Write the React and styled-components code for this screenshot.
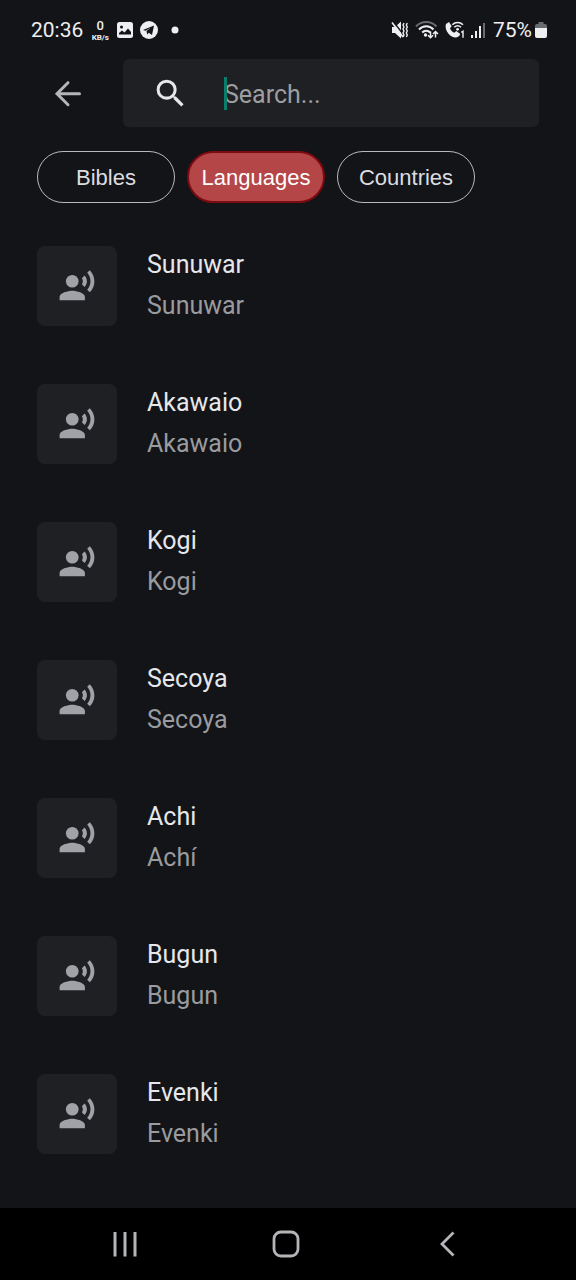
import React, { useState } from 'react';
import styled, { createGlobalStyle } from 'styled-components';
import { MdRecordVoiceOver, MdSearch } from 'react-icons/md';

const GlobalStyle = createGlobalStyle`
* {
    box-sizing: border-box;
}
body {
    margin: 0;
    background: #121418;
    font-family: Roboto, "Noto Sans", sans-serif;
}
`;
const Screen = styled.div`
display: flex;
flex-direction: column;
min-height: 100vh;
background: #121418;
color: #e6e7ea;
`;
const StatusBar = styled.div`
display: flex;
align-items: center;
justify-content: space-between;
height: 59px;
padding: 0 29px 0 31px;
font-size: 21px;
line-height: 24px;
color: #eeeff1;
`;
const StatusGroup = styled.div`
display: flex;
align-items: center;
gap: ${props => props.$gap}px;
svg {
    display: block;
}
`;
const Speed = styled.div`
display: flex;
flex-direction: column;
align-items: center;
width: 20px;
font-size: 13px;
font-weight: 500;
line-height: 15px;
`;
const SpeedUnit = styled.span`
font-size: 8px;
font-weight: 700;
line-height: 9px;
`;
const Header = styled.header`
display: flex;
align-items: center;
gap: 24px;
padding: 0 37px;
`;
const IconButton = styled.button`
display: flex;
align-items: center;
justify-content: center;
width: ${props => props.$width || '100%'};
height: 68px;
padding: 0;
border: 0;
background: none;
color: #b4b5b9;
`;
const SearchBox = styled.label`
display: flex;
align-items: center;
flex: 1;
gap: 35px;
height: 68px;
padding: 0 29px;
border-radius: 6px;
background: #1e2023;
color: #e6e7ea;
`;
const Field = styled.div`
position: relative;
flex: 1;
min-width: 0;
`;
const Caret = styled.span`
position: absolute;
left: 0;
top: 0;
width: 3px;
height: 33px;
background: #0a7d6c;
`;
const SearchInput = styled.input`
display: block;
width: 100%;
height: 33px;
padding: 2px 0 0;
border: 0;
outline: 0;
background: none;
font-family: inherit;
font-size: 25px;
color: #e6e7ea;
&::placeholder {
    color: #9d9ea1;
    opacity: 1;
}
`;
const Filters = styled.div`
display: flex;
gap: 12px;
padding: 24px 37px 14px;
`;
const Pill = styled.button`
width: 138px;
height: 52px;
padding: 2px 0 0;
border-style: solid;
border-color: ${props => (props.$active ? '#7d0a10' : '#b8b9bd')};
border-width: ${props => (props.$active ? 2 : 1)}px;
border-radius: 26px;
background: ${props => (props.$active ? '#b54648' : 'transparent')};
font-family: "Liberation Sans", Arial, sans-serif;
font-size: 22px;
color: ${props => (props.$active ? '#ffffff' : '#dcdde0')};
`;
const List = styled.ul`
flex: 1;
margin: 0;
padding: 0 37px;
list-style: none;
`;
const Row = styled.li`
display: flex;
align-items: center;
gap: 30px;
height: 138px;
`;
const Thumbnail = styled.div`
display: flex;
align-items: center;
justify-content: center;
width: 80px;
height: 80px;
border-radius: 8px;
background: #1e2023;
color: #a1a2a7;
`;
const Names = styled.div`
padding-bottom: 2px;
font-size: 25px;
line-height: 41px;
`;
const Name = styled.div`
color: #e6e7ea;
`;
const NativeName = styled.div`
color: #9a9b9f;
`;
const NavBar = styled.nav`
display: grid;
grid-template-columns: repeat(3, 1fr);
align-items: center;
height: 72px;
padding: 0 48px 0 44px;
background: #000000;
`;

const MuteIcon = () => (
    <svg width="18" height="20" viewBox="0 0 18 20" fill="none" stroke="currentColor">
        <path d="M1 7h3l6-5.500v17L4 13H1z" fill="currentColor" stroke="none" />
        <path d="M2.300 1.500l10 13" stroke="#121418" strokeWidth="1.400" />
        <path d="M1 2.500l11 14.500" strokeWidth="1.600" />
        <path d="M13 3l-1 2 1 2-1 2 1 2-1 2 1 2-1 2M16.300 3l-1 2 1 2-1 2 1 2-1 2 1 2-1 2" strokeWidth="1.400" />
    </svg>
);
const WifiIcon = () => (
    <svg width="24" height="20" viewBox="0 0 24 20" fill="none" stroke="currentColor">
        <path d="M1 6.500c5.500-6 15-6 20.500 0" strokeWidth="2" opacity="0.4" />
        <path d="M4 9.500c4-4.300 10.500-4.300 14.500 0M7.200 12.500c2.300-2.500 5.800-2.500 8 0" strokeWidth="2" />
        <circle cx="10.500" cy="15" r="1.700" fill="currentColor" stroke="none" />
        <path d="M15.500 11.500v6M13 15.200l2.500 2.500 2.500-2.500M20.500 17.500v-6M18 14l2.500-2.500L23 14" strokeWidth="1.500" />
    </svg>
);
const CallIcon = () => (
    <svg width="20" height="20" viewBox="0 0 20 20" fill="none" stroke="currentColor">
        <path d="M1 4l3-2 2.700 4.300-1.700 2c.8 2 2.200 3.600 4.300 4.500l2-1.700 4 2.900c-.8 2.300-2.500 3.500-4.800 3.500C5 17.300-1 10 1 4z" fill="currentColor" stroke="none" />
        <path d="M7.300 4.800c3-3 7.700-3 10.700 0M9.300 7.200c2-2 4.700-2 6.700 0" strokeWidth="1.600" />
        <circle cx="12.600" cy="9.300" r="1.400" fill="currentColor" stroke="none" />
        <path d="M16.300 12.300l1.700-1v6.500" strokeWidth="1.400" />
    </svg>
);
const SignalIcon = () => (
    <svg width="16" height="18" viewBox="0 0 16 18" fill="currentColor">
        <rect x="0" y="14" width="2" height="3" />
        <rect x="4" y="10" width="2" height="7" />
        <rect x="8" y="5" width="2" height="12" />
        <rect x="12" y="2" width="2" height="15" opacity="0.4" />
    </svg>
);
const BatteryIcon = () => (
    <svg width="12" height="18" viewBox="0 0 12 18" fill="currentColor">
        <path d="M3.500 1h5v2H10a2 2 0 0 1 2 2v2H0V5a2 2 0 0 1 2-2h1.500z" opacity="0.4" />
        <path d="M0 7h12v8a2 2 0 0 1-2 2H2a2 2 0 0 1-2-2z" />
    </svg>
);
const PictureIcon = () => (
    <svg width="16" height="16" viewBox="0 0 16 16">
        <rect width="16" height="16" rx="2.500" fill="currentColor" />
        <circle cx="4.500" cy="5" r="1.500" fill="#121418" />
        <path d="M2 12.500V11l3-2.500 2.500 2L11 6.500l3 3.500v2.500z" fill="#121418" />
    </svg>
);
const TelegramIcon = () => (
    <svg width="18" height="18" viewBox="0 0 18 18">
        <circle cx="9" cy="9" r="9" fill="currentColor" />
        <path d="M3 8.900l11-4.400-2 9.500-3.200-2.300-1.600 1.700-.7-3.300 4.500-3.600-5.500 3.300z" fill="#121418" />
    </svg>
);
const DotIcon = () => (
    <svg width="20" height="8" viewBox="0 0 20 8">
        <circle cx="10" cy="4" r="3.500" fill="currentColor" />
    </svg>
);
const ArrowIcon = () => (
    <svg width="28" height="28" viewBox="0 0 28 28" fill="none" stroke="currentColor" strokeWidth="3" strokeLinecap="round">
        <path d="M25.500 14.700H3M14 3.700l-11 11 11 11" />
    </svg>
);
const RecentsIcon = () => (
    <svg width="26" height="28" viewBox="0 0 26 28" fill="none" stroke="currentColor" strokeWidth="3">
        <path d="M3 2v24.500M13 2v24.500M23 2v24.500" />
    </svg>
);
const HomeIcon = () => (
    <svg width="28" height="28" viewBox="0 0 28 28" fill="none" stroke="currentColor" strokeWidth="2.800">
        <rect x="2" y="2" width="24" height="24" rx="7" />
    </svg>
);
const BackIcon = () => (
    <svg width="18" height="28" viewBox="0 0 18 28" fill="none" stroke="currentColor" strokeWidth="2.800">
        <path d="M15.500 2.500L4 14l11.500 11.500" />
    </svg>
);

const filters = ['Bibles', 'Languages', 'Countries'];
const languages = [
    { name: 'Sunuwar', native: 'Sunuwar' },
    { name: 'Akawaio', native: 'Akawaio' },
    { name: 'Kogi', native: 'Kogi' },
    { name: 'Secoya', native: 'Secoya' },
    { name: 'Achi', native: 'Achí' },
    { name: 'Bugun', native: 'Bugun' },
    { name: 'Evenki', native: 'Evenki' },
];

const App = () => {
    const [active, setActive] = useState('Languages');
    return (
        <Screen>
            <GlobalStyle />
            <StatusBar>
                <StatusGroup $gap={7}>
                    <span>20:36</span>
                    <Speed>0<SpeedUnit>KB/s</SpeedUnit></Speed>
                    <PictureIcon />
                    <TelegramIcon />
                    <DotIcon />
                </StatusGroup>
                <StatusGroup $gap={6}>
                    <MuteIcon />
                    <WifiIcon />
                    <CallIcon />
                    <SignalIcon />
                    <StatusGroup $gap={3}>
                        <span>75%</span>
                        <BatteryIcon />
                    </StatusGroup>
                </StatusGroup>
            </StatusBar>
            <Header>
                <IconButton $width="62px" aria-label="Back"><ArrowIcon /></IconButton>
                <SearchBox>
                    <MdSearch size={37} />
                    <Field>
                        <Caret />
                        <SearchInput type="text" placeholder="Search..." aria-label="Search" />
                    </Field>
                </SearchBox>
            </Header>
            <Filters>
                {filters.map(filter => (
                    <Pill key={filter} $active={filter === active} onClick={() => setActive(filter)}>
                        {filter}
                    </Pill>
                ))}
            </Filters>
            <List>
                {languages.map(({ name, native }) => (
                    <Row key={name}>
                        <Thumbnail><MdRecordVoiceOver size={38} /></Thumbnail>
                        <Names>
                            <Name>{name}</Name>
                            <NativeName>{native}</NativeName>
                        </Names>
                    </Row>
                ))}
            </List>
            <NavBar>
                <IconButton aria-label="Recent apps"><RecentsIcon /></IconButton>
                <IconButton aria-label="Home"><HomeIcon /></IconButton>
                <IconButton aria-label="Go back"><BackIcon /></IconButton>
            </NavBar>
        </Screen>
    );
};
export default App;
